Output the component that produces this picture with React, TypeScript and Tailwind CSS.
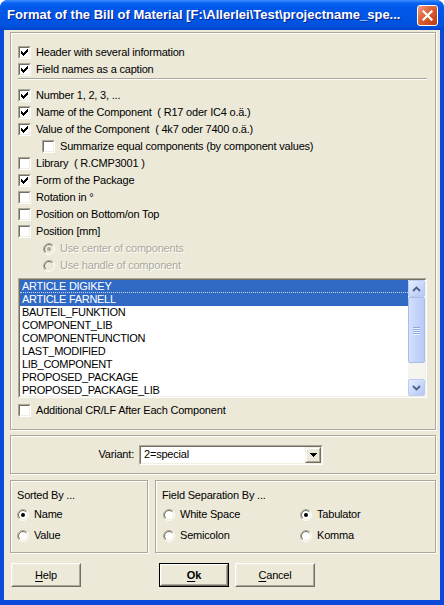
import React from "react";

function CheckBox({ checked }: { checked?: boolean }) {
  return (
    <div className="w-[13px] h-[13px] shrink-0 border border-t-[#ACA899] border-l-[#ACA899] border-b-white border-r-white">
      <div className="relative w-full h-full border border-t-[#716F64] border-l-[#716F64] border-b-[#F1EFE2] border-r-[#F1EFE2] bg-white">
        {checked && (
          <svg
            width="7"
            height="7"
            viewBox="0 0 7 7"
            shapeRendering="crispEdges"
            className="absolute left-[1px] top-[1px]"
          >
            <path
              d="M6 0h1v1H6zM5 1h2v1H5zM0 2h1v1H0zM4 2h3v1H4zM0 3h2v1H0zM3 3h3v1H3zM0 4h5v1H0zM1 5h3v1H1zM2 6h1v1H2z"
              fill="#000"
            />
          </svg>
        )}
      </div>
    </div>
  );
}

function Radio({ checked, disabled }: { checked?: boolean; disabled?: boolean }) {
  return (
    <svg width="12" height="12" viewBox="0 0 12 12" className="shrink-0">
      <circle cx="6" cy="6" r="4.2" fill={disabled ? "#ECE9D8" : "#fff"} />
      <path d="M2.111 9.889A5.5 5.5 0 0 1 9.889 2.111" stroke="#ACA899" fill="none" />
      <path d="M9.889 2.111A5.5 5.5 0 0 1 2.111 9.889" stroke="#fff" fill="none" />
      <path d="M2.818 9.182A4.5 4.5 0 0 1 9.182 2.818" stroke="#716F64" fill="none" />
      <path d="M9.182 2.818A4.5 4.5 0 0 1 2.818 9.182" stroke="#F1EFE2" fill="none" />
      {checked && <circle cx="6" cy="6" r="2" fill={disabled ? "#ACA899" : "#000"} />}
    </svg>
  );
}

const LABEL = "text-[11px] tracking-[-0.2px] leading-[13px] whitespace-pre";

function CheckRow({ label, checked, indent }: { label: string; checked?: boolean; indent?: boolean }) {
  return (
    <div className={"h-[17px] flex items-center gap-[5px] " + (indent ? "ml-[24px]" : "")}>
      <CheckBox checked={checked} />
      <span className={LABEL + " text-black"}>{label}</span>
    </div>
  );
}

function DisabledRadioRow({ label, checked }: { label: string; checked?: boolean }) {
  return (
    <div className="h-[17px] flex items-center gap-[5px] ml-[25px]">
      <Radio checked={checked} disabled />
      <span className={LABEL + " text-[#ACA899] [text-shadow:1px_1px_0_#fff]"}>{label}</span>
    </div>
  );
}

function RadioRow({ label, checked }: { label: string; checked?: boolean }) {
  return (
    <div className="h-[21px] flex items-center gap-[5px]">
      <Radio checked={checked} />
      <span className={LABEL + " text-black"}>{label}</span>
    </div>
  );
}

function Btn({ children, w, def }: { children: React.ReactNode; w: string; def?: boolean }) {
  const raised = (
    <div className="w-full h-full border border-t-white border-l-white border-b-[#716F64] border-r-[#716F64]">
      <div className="w-full h-full border border-t-[#F1EFE2] border-l-[#F1EFE2] border-b-[#ACA899] border-r-[#ACA899] flex items-center justify-center text-[11px] tracking-[-0.2px] text-black">
        {children}
      </div>
    </div>
  );
  return (
    <div className={w + " h-[24px] shrink-0 " + (def ? "border border-black" : "")}>{raised}</div>
  );
}

const items = [
  "ARTICLE DIGIKEY",
  "ARTICLE FARNELL",
  "BAUTEIL_FUNKTION",
  "COMPONENT_LIB",
  "COMPONENTFUNCTION",
  "LAST_MODIFIED",
  "LIB_COMPONENT",
  "PROPOSED_PACKAGE",
  "PROPOSED_PACKAGE_LIB",
];

function ScrollBar() {
  return (
    <div className="w-[17px] h-full flex flex-col bg-[#F5F4EF] shrink-0">
      <div className="h-[17px] rounded-[2px] border border-[#BACCF4] bg-[linear-gradient(135deg,#E6EEFF_0%,#C6D6FB_60%,#B4C8F6_100%)] flex items-center justify-center">
        <svg width="9" height="6" viewBox="0 0 9 6">
          <path d="M1 5L4.5 1.5L8 5" stroke="#4D6185" strokeWidth="1.8" fill="none" />
        </svg>
      </div>
      <div className="h-[66px] rounded-[2px] border border-[#A6BCEC] bg-[linear-gradient(90deg,#D3E0FC_0%,#C4D4FA_50%,#B8CBF6_100%)] flex flex-col items-center justify-center gap-[1px]">
        {[0, 1, 2, 3].map((i) => (
          <div key={i} className="w-[7px] h-[1px] bg-[#8DA6E4] shadow-[0_1px_0_#EEF3FE]" />
        ))}
      </div>
      <div className="flex-1" />
      <div className="h-[17px] rounded-[2px] border border-[#BACCF4] bg-[linear-gradient(135deg,#E6EEFF_0%,#C6D6FB_60%,#B4C8F6_100%)] flex items-center justify-center">
        <svg width="9" height="6" viewBox="0 0 9 6">
          <path d="M1 1L4.5 4.5L8 1" stroke="#4D6185" strokeWidth="1.8" fill="none" />
        </svg>
      </div>
    </div>
  );
}

const GROUP = "border border-[#ACA899] shadow-[inset_1px_1px_0_#fff,1px_1px_0_#fff]";

export default function App() {
  return (
    <div className="w-[444px] h-[605px] flex flex-col bg-[#0A49DA] rounded-t-[8px] overflow-hidden font-['Liberation_Sans',Arial,sans-serif]">
      {/* Title bar */}
      <div className="h-[30px] shrink-0 flex items-center pl-[7px] pr-[6px] bg-[linear-gradient(180deg,#3D8FFF_0%,#0A64F2_10%,#0058EA_25%,#0055E4_60%,#0052DF_85%,#0144CC_100%)]">
        <span className="flex-1 text-white font-bold text-[13px] leading-[16px] whitespace-nowrap [text-shadow:1px_1px_0_#0A1F8A]">
          Format of the Bill of Material [F:\Allerlei\Test\projectname_spe...
        </span>
        <div className="w-[21px] h-[21px] rounded-[3px] border border-white bg-[linear-gradient(135deg,#F0A080_0%,#E06A42_35%,#CF4E24_70%,#B83A12_100%)] flex items-center justify-center">
          <svg width="11" height="11" viewBox="0 0 11 11">
            <path d="M1.5 1.5L9.5 9.5M9.5 1.5L1.5 9.5" stroke="#fff" strokeWidth="2.2" strokeLinecap="square" />
          </svg>
        </div>
      </div>

      {/* Body */}
      <div className="flex-1 mx-[4px] mb-[5px] bg-[#ECE9D8] flex flex-col pl-[6px] pr-[4px]">
        {/* Main group */}
        <div className={GROUP + " mt-[2px] h-[398px] flex flex-col pt-[11px] pl-[7px] pr-[8px]"}>
          <CheckRow label="Header with several information" checked />
          <CheckRow label="Field names as a caption" checked />
          <div className="h-[2px] border-t border-t-[#ACA899] border-b border-b-white" />
          <div className="mt-[7px]" />
          <CheckRow label="Number 1, 2, 3, ..." checked />
          <CheckRow label="Name of the Component  ( R17 oder IC4 o.ä.)" checked />
          <CheckRow label="Value of the Component  ( 4k7 oder 7400 o.ä.)" checked />
          <CheckRow label="Summarize equal components (by component values)" indent />
          <CheckRow label="Library  ( R.CMP3001 )" />
          <CheckRow label="Form of the Package" checked />
          <CheckRow label="Rotation in °" />
          <CheckRow label="Position on Bottom/on Top" />
          <CheckRow label="Position [mm]" />
          <DisabledRadioRow label="Use center of components" checked />
          <DisabledRadioRow label="Use handle of component" />

          {/* Listbox */}
          <div className="mt-[4px] w-[409px] h-[120px] border border-t-[#ACA899] border-l-[#ACA899] border-b-white border-r-white">
            <div className="w-full h-full border border-t-[#716F64] border-l-[#716F64] border-b-[#F1EFE2] border-r-[#F1EFE2] bg-white flex">
              <div className="flex-1 flex flex-col overflow-hidden">
                {items.map((it, i) => (
                  <div
                    key={it}
                    className={
                      "h-[13px] shrink-0 pl-[2px] text-[11px] leading-[13px] tracking-[-0.3px] whitespace-nowrap " +
                      (i < 2 ? "bg-[#316AC5] text-white" : "text-black") +
                      (i === 0 ? " border-b border-dotted border-b-[#C9D6F0] leading-[12px]" : "")
                    }
                  >
                    {it}
                  </div>
                ))}
              </div>
              <ScrollBar />
            </div>
          </div>

          <div className="mt-[4px]" />
          <CheckRow label="Additional CR/LF After Each Component" />
        </div>

        {/* Variant group */}
        <div className={GROUP + " mt-[5px] h-[39px] flex items-center"}>
          <span className="w-[123px] text-right text-[11px] tracking-[-0.2px] text-black">Variant:</span>
          <div className="ml-[5px] w-[184px] h-[20px] border border-t-[#ACA899] border-l-[#ACA899] border-b-white border-r-white">
            <div className="w-full h-full border border-t-[#716F64] border-l-[#716F64] border-b-[#F1EFE2] border-r-[#F1EFE2] bg-white flex items-center">
              <span className="flex-1 pl-[3px] text-[11px] tracking-[-0.2px] text-black">2=special</span>
              <div className="w-[16px] h-[16px] border border-t-[#F1EFE2] border-l-[#F1EFE2] border-b-[#716F64] border-r-[#716F64]">
                <div className="w-full h-full border border-t-white border-l-white border-b-[#ACA899] border-r-[#ACA899] bg-[#ECE9D8] flex items-center justify-center">
                  <svg width="7" height="4" viewBox="0 0 7 4" shapeRendering="crispEdges">
                    <path d="M0 0h7v1H0zM1 1h5v1H1zM2 2h3v1H2zM3 3h1v1H3z" fill="#000" />
                  </svg>
                </div>
              </div>
            </div>
          </div>
        </div>

        {/* Sorted / Field separation */}
        <div className="mt-[6px] flex">
          <div className={GROUP + " w-[138px] h-[73px] flex flex-col pt-[6px] pl-[6px]"}>
            <div className={LABEL + " h-[17px] flex items-center text-black"}>Sorted By ...</div>
            <RadioRow label="Name" checked />
            <RadioRow label="Value" />
          </div>
          <div className={GROUP + " ml-[7px] w-[281px] h-[73px] flex flex-col pt-[6px] pl-[6px]"}>
            <div className={LABEL + " h-[17px] flex items-center text-black"}>Field Separation By ...</div>
            <div className="grid grid-cols-[137px_1fr] ml-[1px]">
              <RadioRow label="White Space" />
              <RadioRow label="Tabulator" checked />
              <RadioRow label="Semicolon" />
              <RadioRow label="Komma" />
            </div>
          </div>
        </div>

        {/* Buttons */}
        <div className="mt-[10px] flex">
          <div className="ml-[1px]">
            <Btn w="w-[70px]">
              <span>
                <span className="underline underline-offset-[2px]">H</span>elp
              </span>
            </Btn>
          </div>
          <div className="ml-[78px]">
            <Btn w="w-[70px]" def>
              <span className="font-bold">
                <span className="underline underline-offset-[2px]">O</span>k
              </span>
            </Btn>
          </div>
          <div className="ml-[6px]">
            <Btn w="w-[80px]">
              <span>
                <span className="underline underline-offset-[2px]">C</span>ancel
              </span>
            </Btn>
          </div>
        </div>
      </div>
    </div>
  );
}
